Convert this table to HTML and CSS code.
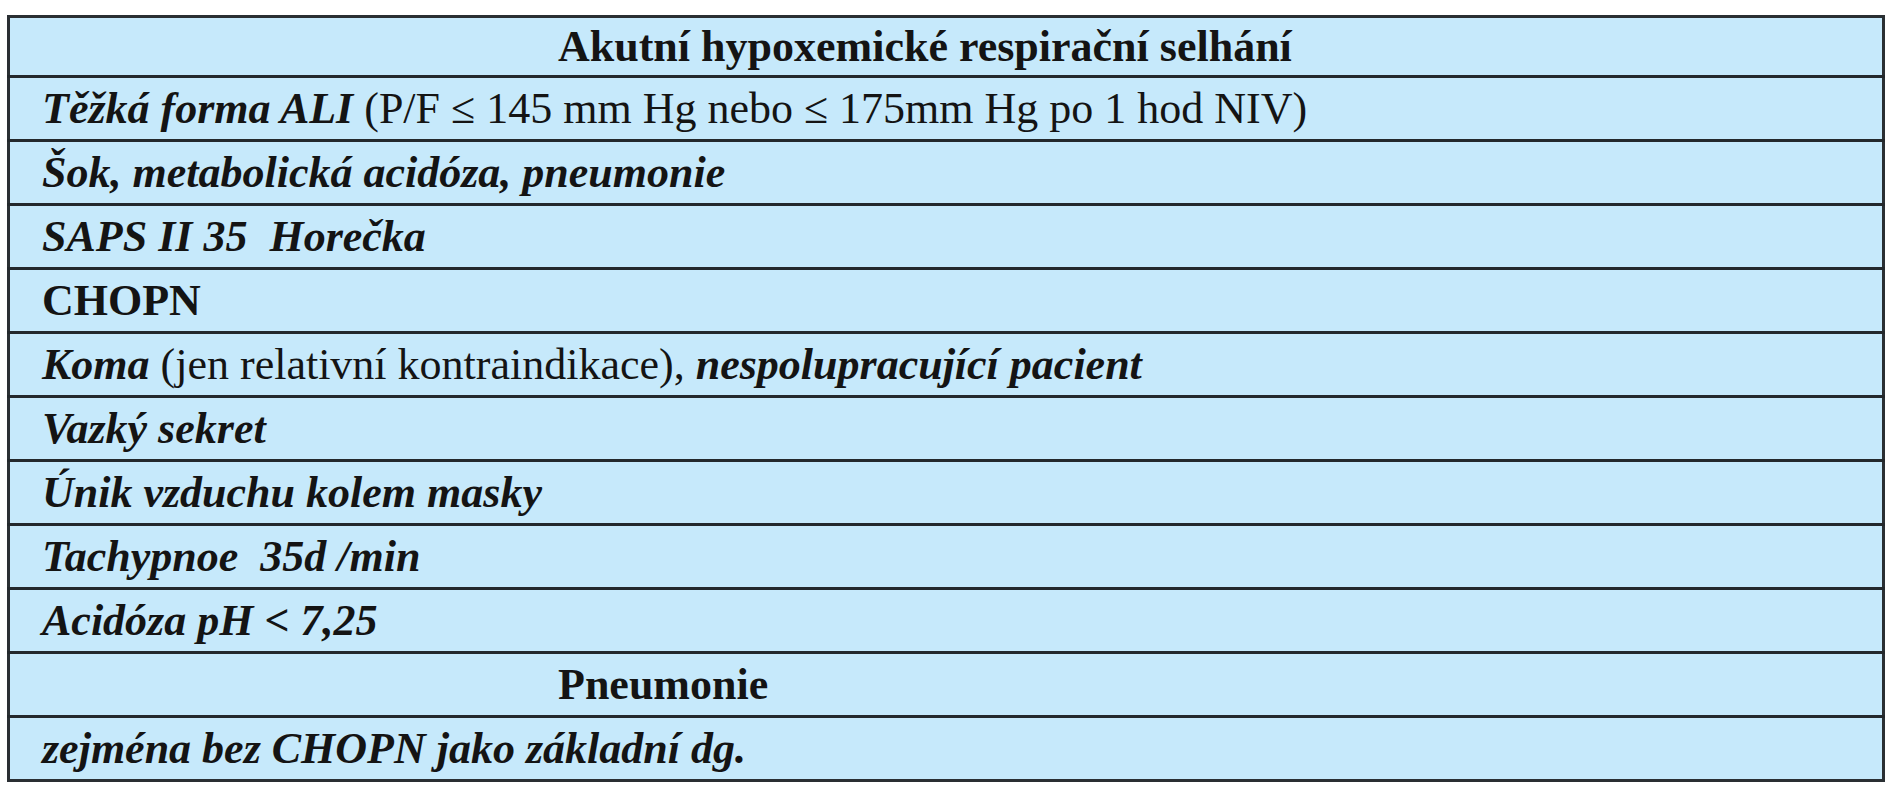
FILE: index.html
```html
<!DOCTYPE html>
<html lang="cs">
<head>
<meta charset="utf-8">
<title>Akutní hypoxemické respirační selhání</title>
<link rel="stylesheet" href="styles.css">
</head>
<body>
<table class="tbl">
  <tr class="head"><td><b>Akutní hypoxemické respirační selhání</b></td></tr>
  <tr><td><i class="bi">Těžká forma ALI</i> (P/F ≤ 145 mm Hg nebo ≤ 175mm Hg po 1 hod NIV)</td></tr>
  <tr><td><i class="bi">Šok, metabolická acidóza, pneumonie</i></td></tr>
  <tr><td><i class="bi">SAPS II 35&nbsp; Horečka</i></td></tr>
  <tr><td><b>CHOPN</b></td></tr>
  <tr><td><i class="bi">Koma</i> (jen relativní kontraindikace), <i class="bi">nespolupracující pacient</i></td></tr>
  <tr><td><i class="bi">Vazký sekret</i></td></tr>
  <tr><td><i class="bi">Únik vzduchu kolem masky</i></td></tr>
  <tr><td><i class="bi">Tachypnoe&nbsp; 35d /min</i></td></tr>
  <tr><td><i class="bi">Acidóza pH &lt; 7,25</i></td></tr>
  <tr class="head"><td><b>Pneumonie</b></td></tr>
  <tr><td><i class="bi">zejména bez CHOPN jako základní dg.</i></td></tr>
</table>
</body>
</html>
```
FILE: styles.css
```css
html, body {
  margin: 0;
  padding: 0;
  background: #ffffff;
}
body {
  padding: 15px 0 0 7px;
  font-family: "Liberation Serif", "Times New Roman", serif;
  color: #141414;
}
.tbl {
  border-collapse: collapse;
  width: 1878px;
  background: #c6e9fb;
  border: 3px solid #2a2f33;
}
.tbl td {
  border-top: 3px solid #23282c;
  height: 61px;
  padding: 0 0 0 32px;
  font-size: 44px;
  line-height: 1;
  vertical-align: middle;
  white-space: nowrap;
}
.tbl tr:first-child td {
  border-top: none;
  height: 57px;
}
.tbl tr.head td {
  padding-left: 548px;
}
.bi {
  font-weight: bold;
  font-style: italic;
}
```
